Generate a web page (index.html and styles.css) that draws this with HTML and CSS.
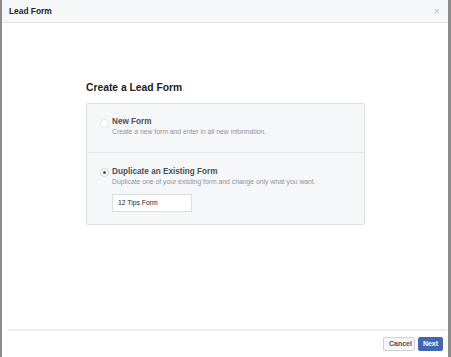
FILE: index.html
```html
<!DOCTYPE html>
<html>
<head>
<meta charset="utf-8">
<link rel="stylesheet" href="styles.css">
</head>
<body>
<div class="dialog">
  <div class="header">
    <span class="title">Lead Form</span>
    <span class="close">×</span>
  </div>
  <div class="content">
    <div class="inner">
      <h2 class="heading">Create a Lead Form</h2>
      <div class="box">
        <div class="option first">
          <span class="radio"></span>
          <div class="text">
            <div class="label">New Form</div>
            <div class="desc">Create a new form and enter in all new information.</div>
          </div>
        </div>
        <div class="option second">
          <span class="radio checked"></span>
          <div class="text">
            <div class="label">Duplicate an Existing Form</div>
            <div class="desc">Duplicate one of your existing form and change only what you want.</div>
            <div class="select">12 Tips Form</div>
          </div>
        </div>
      </div>
    </div>
  </div>
  <div class="footer">
    <button class="btn cancel">Cancel</button>
    <button class="btn next">Next</button>
  </div>
</div>
</body>
</html>
```
FILE: styles.css
```css
html, body { margin: 0; padding: 0; }
body {
  background: #8c8c8c;
  width: 451px;
  height: 357px;
  overflow: hidden;
  font-family: "Liberation Sans", Arial, sans-serif;
  color: #1d2129;
}
.dialog {
  margin-left: 2px;
  width: 446px;
  height: 357px;
  background: #fff;
  display: flex;
  flex-direction: column;
}
.header {
  height: 22px;
  background: #f6f7f9;
  border-bottom: 1px solid #e5e5e5;
  display: flex;
  align-items: center;
  justify-content: space-between;
  padding: 0 8px 0 7px;
  flex-shrink: 0;
}
.title { font-size: 8.4px; font-weight: bold; color: #1d2129; }
.close { font-size: 11px; color: #c0c0c0; line-height: 1; }
.content { flex: 1; padding-top: 58px; }
.inner { margin-left: 84px; width: 279px; }
.heading { margin: 0 0 9px 0; font-size: 10.3px; font-weight: bold; color: #1d2129; line-height: 13px; }
.box {
  background: #f6f7f9;
  border: 1px solid #dddfe2;
  border-radius: 2px;
}
.option {
  display: flex;
  padding: 12px 10px 15px 13px;
}
.option.second { border-top: 1px solid #e5e6e9; padding-top: 13px; padding-bottom: 12px; }
.radio {
  width: 7px; height: 7px;
  border-radius: 50%;
  border: 1px solid #e3e4e6;
  background: #fff;
  margin-top: 3px;
  margin-right: 3px;
  flex-shrink: 0;
  position: relative;
}
.second .radio { margin-top: 2px; }
.radio.checked { border-color: #cfd1d5; }
.radio.checked::after {
  content: "";
  position: absolute;
  left: 2px; top: 2px;
  width: 3px; height: 3px;
  border-radius: 50%;
  background: #4b4f56;
}
.label { font-size: 8.2px; font-weight: bold; color: #4b4f56; line-height: 11px; }
.desc { font-size: 6.8px; color: #90949c; line-height: 10px; white-space: nowrap; }
.select {
  margin-top: 7px;
  height: 16px;
  border: 1px solid #dddfe2;
  background: #fff;
  font-size: 6.8px;
  color: #1d2129;
  line-height: 16px;
  padding-left: 5px;
  width: 73px;
}
.footer {
  box-sizing: border-box;
  margin: 0 1px 0 6px;
  border-top: 2px solid #eeeff1;
  height: 28px;
  flex-shrink: 0;
  display: flex;
  justify-content: flex-end;
  align-items: flex-start;
  padding-top: 6px;
  padding-right: 4px;
  gap: 3px;
}
.btn {
  font-family: "Liberation Sans", Arial, sans-serif;
  font-size: 7px;
  font-weight: bold;
  height: 14px;
  padding: 0 5px;
  border-radius: 2px;
  line-height: 12px;
}
.cancel { background: #f6f7f9; border: 1px solid #ced0d4; color: #4b4f56; width: 32px; }
.next { background: #4267b2; border: 1px solid #4267b2; color: #fff; width: 25px; padding: 0; }
```
